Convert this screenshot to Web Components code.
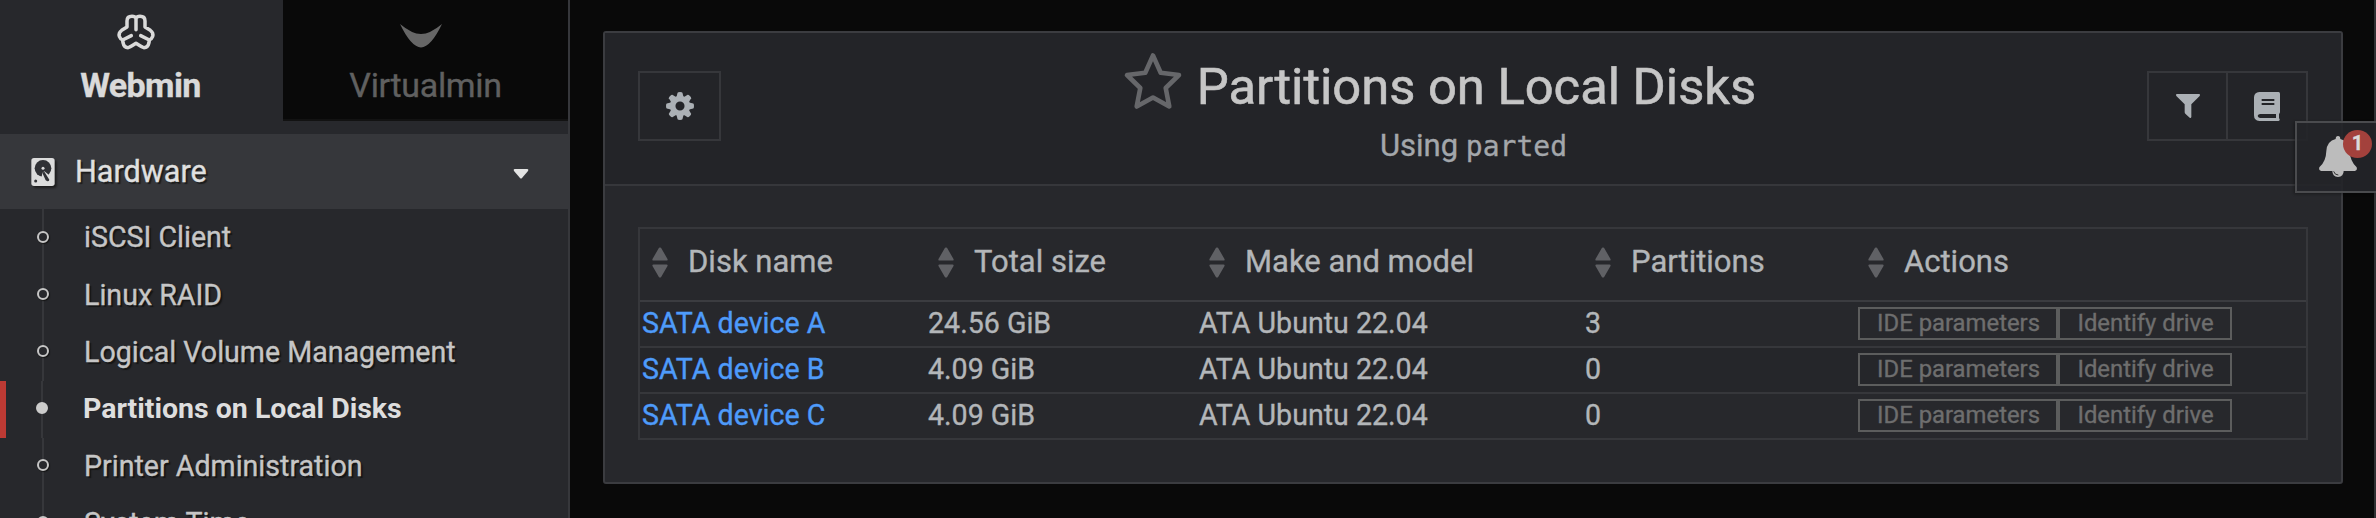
<!DOCTYPE html>
<html lang="en"><head><meta charset="utf-8"><title>Webmin</title>
<style>html,body{margin:0;height:100%;overflow:hidden;background:#090909}body{font-family:Roboto,sans-serif;-webkit-text-stroke:.35px currentColor}</style></head>
<body>
<wm-app></wm-app>
<script>
const define=(name,html)=>customElements.define(name,class extends HTMLElement{
  constructor(){super();this.attachShadow({mode:'open'});}
  connectedCallback(){this.shadowRoot.innerHTML=typeof html==='function'?html(this):html;}
});

const ICONS={
webmin:[60,60,'0 0 180 180','<g fill="none" stroke="#dadada" stroke-width="10.5" stroke-linecap="round" stroke-linejoin="round"><path d="M93 74V40Q90 34 81 34Q66 34 66 48V66L50 76Q40 83 43 94Q46 102 53 105L54 113Q57 128 69 128Q73 128 93 115Q113 128 117 128Q129 128 132 113L133 105Q140 102 143 94Q146 83 136 76L120 66V48Q120 34 105 34Q96 34 93 40"/><path d="M53 105L79 92M133 105L107 92"/></g>'],
virtualmin:[42,24,'0 0 42 24','<path fill="#666" d="M0 0Q12 10 21 10Q30 10 42 0Q31 23 21 23.500Q11 23 0 0Z"/>'],
hdd:[24,28,'0 0 70 84','<rect width="70" height="84" rx="8" fill="#dcdcdc"/><circle cx="35" cy="31" r="25" fill="#303135"/><path fill="#dcdcdc" d="M30 62L33 45L39 40L62 58L56 74Z"/><circle cx="35" cy="31" r="4.500" fill="#dcdcdc"/><path fill="#303135" d="M33 44L39 41L54 65Q54 70 48 70L43 67Z"/><circle cx="13" cy="69" r="4.500" fill="#303135"/>'],
caret:[16,10,'0 0 16 10','<path fill="#e4e4e4" d="M1.500 0H14.500Q16 .5 15 2L9 9Q8 10 7 9L1 2Q0 .5 1.500 0Z"/>'],
gear:[28,28,'-40 -40 80 80','<g fill="#abb0b5"><path fill-rule="evenodd" d="M0-29A29 29 0 1 0 0 29A29 29 0 1 0 0-29ZM0-13A13 13 0 1 1 0 13A13 13 0 1 1 0-13Z"/>'+[0,45,90,135,180,225,270,315].map(a=>`<path transform="rotate(${a})" d="M-10-26L-7-38Q-6-40 0-40Q6-40 7-38L10-26L6-23H-6Z"/>`).join('')+'</g>'],
star:[58,58,'0 0 58 58','<path fill="none" stroke="#66676a" stroke-width="4.600" stroke-linejoin="round" d="M29 3.500L36.700 20.700L55 23L41.700 36L45.300 54.500L29 45.500L12.700 54.500L16.300 36L3 23L21.300 20.700Z"/>'],
filter:[24,24,'0 0 72 72','<path fill="#abb0b5" d="M2 0H70Q74 2 71 6L46 31V69Q45 73 41 71L28 59Q26 57 26 54V31L1 6Q-2 2 2 0Z"/>'],
book:[26,29,'0 0 78 87','<path fill="#abb0b5" fill-rule="evenodd" d="M16 0H74Q78 0 78 5V60Q78 63 75 66V79Q78 81 77 84Q76 87 73 87H16Q0 86 0 70V16Q1 1 16 0ZM23 21V27H61V21ZM23 33V39H61V33ZM18 66Q11 67 11 72Q12 77 18 78H66V66Z"/>'],
bell:[38,41,'0 0 114 123','<path fill="#bcbcbc" d="M57 0Q64 0 64 9Q90 15 92 45Q93 75 113 94Q116 103 107 105H74Q74 122 57 123Q40 122 40 105H7Q-2 103 1 94Q21 77 22 45Q24 15 50 9Q50 0 57 0Z"/><path d="M44 106Q47 117 58 117" fill="none" stroke="#333" stroke-width="3"/>'],
sort:[16,31,'0 0 16 31','<path fill="#606165" d="M7 .8Q8 0 9 .8L15.500 12Q16 13.500 14.500 13.500H1.500Q0 13.500 .5 12ZM7 30.200Q8 31 9 30.200L15.500 19Q16 17.500 14.500 17.500H1.500Q0 17.500 .5 19Z"/>']
};
define('wm-icon',el=>{const [w,h,vb,body]=ICONS[el.getAttribute('name')];
  return `<style>:host{display:block;flex:none;width:${w}px;height:${h}px}svg{display:block;overflow:visible}</style><svg width="${w}" height="${h}" viewBox="${vb}">${body}</svg>`;});

define('wm-tab',`<style>:host{display:flex;flex-direction:column;align-items:center;box-sizing:border-box;height:121px;color:#dadada;font-size:34px;font-weight:700;line-height:40px}
:host([off]){background:#090909;border-bottom:2px solid #121212;color:#606060;font-weight:400}
.i{height:65px;display:flex;align-items:flex-start;padding-top:var(--top,0);box-sizing:border-box}
span{letter-spacing:-.6px;transform:translateX(var(--dx,0))}:host([off]) span{letter-spacing:-.35px}</style><div class="i"><slot name="icon"></slot></div><span><slot></slot></span>`);

define('wm-item',`<style>:host{display:flex;flex:none;align-items:stretch;height:57px;color:#c6c6c6;font-size:28.600px;line-height:56px;text-shadow:2px 2px 1px #151515;white-space:nowrap}
:host([first]){height:58px}
.bar{width:6px;flex:none}
.rail{width:43px;margin-right:35px;flex:none;display:grid;place-items:center end;background:linear-gradient(#36373b,#36373b) 36px 0/2px 100% no-repeat}
i{box-sizing:border-box;width:12px;height:12px;border:2px solid #c6c6c6;border-radius:50%;margin-bottom:3px;background:#27282c;box-shadow:1px 1px 1px #151515}
:host([active]){color:#dedede;font-weight:700;font-size:28.500px;text-shadow:none;-webkit-text-stroke:0}
:host([active]) .bar{background:#bd3a34}:host([active]) i{background:#ccc;border-color:#ccc;box-shadow:none}
:host([active]) .rail{width:42px;background-position-x:35px}</style><div class="bar"></div><div class="rail"><i></i></div><span><slot></slot></span>`);

define('wm-sidebar',`<style>:host{display:flex;flex-direction:column;width:570px;height:518px;box-sizing:border-box;border-right:2px solid #36373b;background:#27282c;overflow:hidden}
.tabs{display:grid;grid-template-columns:283px 285px;height:134px;flex:none}
.head{height:75px;flex:none;display:flex;align-items:center;background:#36373b;padding:0 39px 0 31px;color:#e0e0e0;font-size:30.600px;text-shadow:2px 2px 1px #1c1c1c}
.head wm-icon[name=hdd]{filter:drop-shadow(2px 2px 1px #1c1c1c);margin-right:20px}.head span{flex:1}.head wm-icon[name=caret]{margin-top:4px}</style>
<div class="tabs"><wm-tab style="--top:5px;--dx:-1px"><wm-icon slot="icon" name="webmin" style="margin-left:-13px"></wm-icon>Webmin</wm-tab>
<wm-tab off style="--top:24px"><wm-icon slot="icon" name="virtualmin" style="margin-left:-9px"></wm-icon>Virtualmin</wm-tab></div>
<div class="head"><wm-icon name="hdd"></wm-icon><span>Hardware</span><wm-icon name="caret"></wm-icon></div>
<wm-item first>iSCSI Client</wm-item><wm-item>Linux RAID</wm-item><wm-item>Logical Volume Management</wm-item><wm-item active>Partitions on Local Disks</wm-item><wm-item>Printer Administration</wm-item><wm-item>System Time</wm-item>`);

define('wm-tool',`<style>:host{display:grid;place-items:center;box-sizing:border-box;width:83px;height:70px;border:2px solid #36373b}</style><slot></slot>`);

define('wm-header',`<style>:host{display:grid;grid-template-columns:200px 1fr 266px;height:153px;box-sizing:border-box;border-bottom:2px solid #36373b;background:#232428;padding:0 33px}
.l,.r{padding-top:38px;display:flex;align-items:flex-start}.r{justify-content:flex-end}
.r wm-tool{width:81px}.r wm-tool+wm-tool{width:82px;margin-left:-2px}
.c{display:flex;flex-direction:column;align-items:center}
.t{display:flex;height:76px;margin-top:16px;color:#c6c6c6;font-size:50.700px;line-height:76px;white-space:nowrap;-webkit-text-stroke-width:.6px}
.t wm-icon{margin:3px 15px 0 0}
.s{color:#a3a7ab;font-size:31px;line-height:40px;margin-top:1px;white-space:nowrap;margin-left:67px}
tt{font:28px/1 "DejaVu Sans Mono",monospace}</style>
<div class="l"><wm-tool><wm-icon name="gear"></wm-icon></wm-tool></div>
<div class="c"><div class="t"><wm-icon name="star"></wm-icon><span>Partitions on Local Disks</span></div><div class="s">Using <tt>parted</tt></div></div>
<div class="r"><wm-tool><wm-icon name="filter"></wm-icon></wm-tool><wm-tool><wm-icon name="book"></wm-icon></wm-tool></div>`);

define('wm-actions',`<style>:host{display:flex;padding-top:5px}b{flex:none;font-weight:400;box-sizing:border-box;height:33px;border:2px solid #5c5d5d;color:#6e6e6e;font-size:23.850px;line-height:29px;text-align:center;white-space:nowrap;padding-left:1px}
.p{width:200px}.d{width:174px}</style><b class="p">IDE parameters</b><b class="d">Identify drive</b>`);

const COLS='286px 271px 386px 273px 1fr';
define('wm-th',`<style>:host{display:flex;align-items:flex-start;padding:17.500px 0 0 12px;font-size:31px;line-height:30px;color:#b3b6b9}wm-icon{margin-right:20px}</style><wm-icon name="sort"></wm-icon><span><slot></slot></span>`);
define('wm-row',el=>`<style>:host{display:grid;grid-template-columns:${COLS};height:44px;border-bottom:2px solid #36373b;font-size:28.600px;line-height:43px;color:#b3b6b9}
:host(:last-of-type){border-bottom:0}:host([alt]){background:#25262a}
span{padding-left:2px;white-space:nowrap}.n{color:#4e9bfa}wm-actions{margin-left:2px}</style>
<span class="n">${el.getAttribute('name')}</span><span>${el.getAttribute('size')}</span><span>ATA Ubuntu 22.04</span><span>${el.getAttribute('parts')}</span><wm-actions></wm-actions>`);
define('wm-table',`<style>:host{display:block;border:2px solid #36373b;box-sizing:border-box;height:213px}
.h{display:grid;grid-template-columns:${COLS};height:71px;border-bottom:2px solid #3b3c40}</style>
<div class="h"><wm-th>Disk name</wm-th><wm-th>Total size</wm-th><wm-th>Make and model</wm-th><wm-th>Partitions</wm-th><wm-th>Actions</wm-th></div>
<wm-row name="SATA device A" size="24.56 GiB" parts="3"></wm-row><wm-row alt name="SATA device B" size="4.09 GiB" parts="0"></wm-row><wm-row name="SATA device C" size="4.09 GiB" parts="0"></wm-row>`);

define('wm-panel',`<style>:host{display:block;box-sizing:border-box;width:1740px;height:453px;border:2px solid #3b3c40;border-radius:3px;background:#27282c}wm-table{margin:41px 33px 0}</style><wm-header></wm-header><wm-table></wm-table>`);

define('wm-alert',`<style>:host{position:absolute;left:2295px;top:121px;display:block;box-sizing:border-box;width:81px;height:72px;border:2px solid #4a4b4e;border-right:0;background:rgba(36,37,41,.93);padding:13px 0 0 22px;box-shadow:-1px 1px 3px #0005}
i{position:absolute;left:46px;top:7px;width:29px;height:28px;border-radius:50%;background:#a3413c;color:#dadada;font:700 20px/27px Roboto,sans-serif;text-align:center}</style><wm-icon name="bell"></wm-icon><i>1</i>`);

define('wm-app',`<style>:host{display:flex;position:relative;width:2376px;height:518px;box-sizing:border-box;background:#090909;border-right:2px solid #303133}wm-panel{margin:31px 0 0 33px}</style><wm-sidebar></wm-sidebar><wm-panel></wm-panel><wm-alert></wm-alert>`);
</script></body></html>
